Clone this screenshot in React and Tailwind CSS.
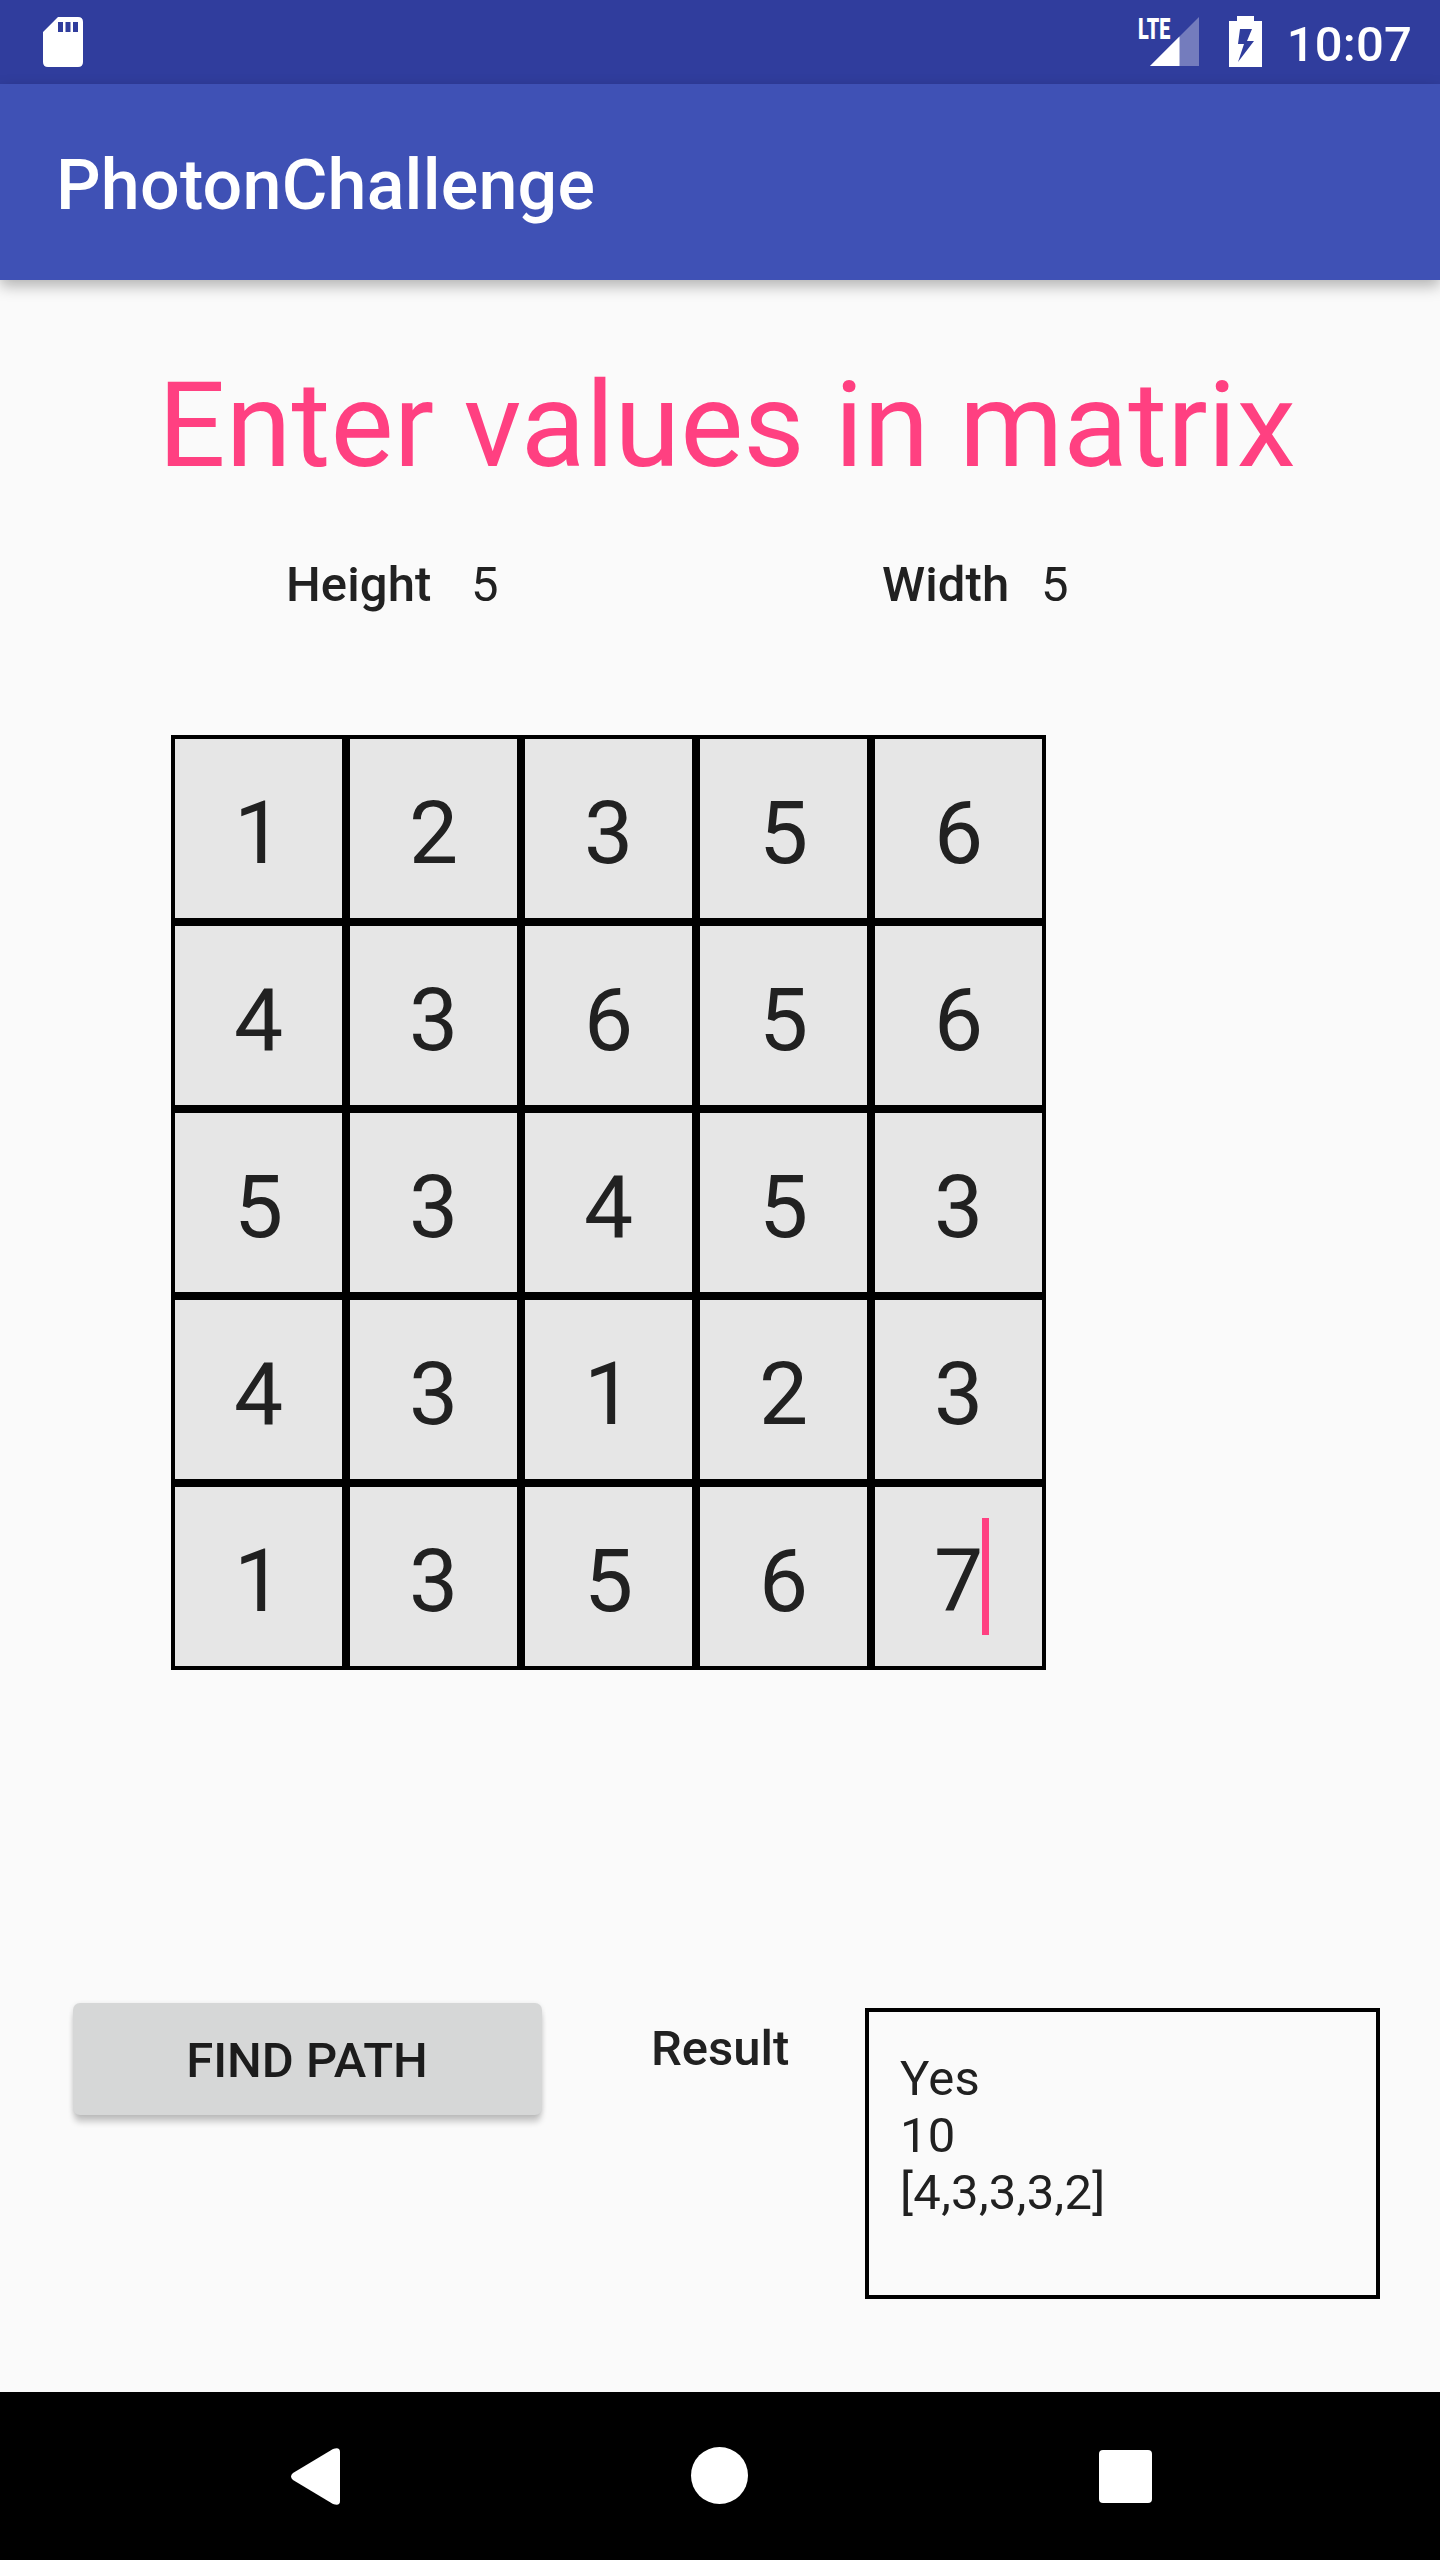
const matrix = [
  [1, 2, 3, 5, 6],
  [4, 3, 6, 5, 6],
  [5, 3, 4, 5, 3],
  [4, 3, 1, 2, 3],
  [1, 3, 5, 6, 7],
];

function StatusBar() {
  return (
    <div className="flex h-[84px] items-start bg-[#303d9d] pl-[43px] pr-[28px] text-white">
      <svg className="mt-[17px] h-[50px] w-10" viewBox="0 0 40 50" fill="currentColor">
        <path
          fillRule="evenodd"
          d="M15 0H35Q40 0 40 5V45Q40 50 35 50H5Q0 50 0 45V15ZM15 5V15H20V5ZM22.5 5V15H27.5V5ZM30 5V15H35V5Z"
        />
      </svg>
      <div className="ml-auto flex items-start">
        <div className="relative mt-[17px] h-[49px] w-[61px]">
          <svg className="h-[49px] w-[61px]" viewBox="0 0 61 49">
            <path d="M61 0V49H12Z" fill="#fff" fillOpacity="0.33" />
            <path d="M41.5 19.5V49H12Z" fill="#fff" />
          </svg>
          <span className="absolute left-0 top-[-5px] origin-left scale-x-[0.66] text-[30px] font-black leading-[34px]">LTE</span>
        </div>
        <svg className="ml-[30px] mt-4 h-[51px] w-[33px]" viewBox="0 0 33 51" fill="currentColor">
          <path
            fillRule="evenodd"
            d="M8 0H25V5H33V51H0V5H8ZM11 13L9 28H15L9 46L25 25H18L23 13Z"
          />
        </svg>
        <span className="ml-[25px] mt-4 text-[49px] font-medium leading-[57px] tracking-[0.2px]">10:07</span>
      </div>
    </div>
  );
}

function Cell({ value, focused }) {
  return (
    <div className="relative flex h-[187px] w-[175px] justify-center border-4 border-black bg-[#e6e6e6] pt-[42px] text-[87.5px] leading-[104px]">
      {value}
      {focused && <div className="absolute left-[107px] top-[31px] h-[117px] w-[7px] bg-[#ff4081]" />}
    </div>
  );
}

function NavBar() {
  return (
    <div className="flex h-[168px] items-start bg-black pl-[291px] text-white">
      <svg className="mt-14 h-[57px] w-[49px]" viewBox="0 0 49 57" fill="currentColor">
        <path d="M2 25L42 1Q49 -1.5 49 4V53Q49 58.500 42 56L2 32Q-2 28.500 2 25Z" />
      </svg>
      <div className="ml-[351px] mt-[55px] h-[57px] w-[57px] rounded-full bg-white" />
      <div className="ml-[351px] mt-[58px] h-[53px] w-[53px] rounded-[4px] bg-white" />
    </div>
  );
}

export default function App() {
  return (
    <div className="flex h-[2560px] w-[1440px] flex-col bg-[#fafafa] font-['Roboto',sans-serif] text-[#212121]">
      <StatusBar />
      <header className="z-10 h-[196px] bg-[#3f51b5] pl-14 pt-[60px] text-[70px] font-medium leading-[82px] tracking-[0.2px] text-white shadow-[0_6px_14px_rgba(0,0,0,0.29)]">
        PhotonChallenge
      </header>
      <main className="flex grow flex-col">
        <h1 className="mt-[76px] pl-[158px] text-[119px] leading-[139px] tracking-[0.09px] text-[#ff4081]">
          Enter values in matrix
        </h1>
        <div className="mt-[61px] flex text-[49px] leading-[57px]">
          <span className="ml-[286px] w-[185px] font-medium tracking-[0.1px]">Height</span>
          <span className="w-[411px]">5</span>
          <span className="w-[159px] font-medium tracking-[0.1px]">Width</span>
          <span>5</span>
        </div>
        <div className="ml-[171px] mt-[122px] grid w-[875px] grid-cols-5">
          {matrix.map((row, r) =>
            row.map((value, c) => <Cell key={`${r}-${c}`} value={value} focused={r === 4 && c === 4} />)
          )}
        </div>
        <div className="mt-[333px] flex items-start pl-[73px] text-[49px] leading-[57px]">
          <button className="h-[112px] w-[469px] rounded-[7px] bg-[#d6d7d7] pr-px pt-[3px] font-medium text-[#1c1c1c] shadow-[0_8px_6px_-1px_rgba(0,0,0,0.2),0_1px_5px_rgba(0,0,0,0.1)]">
            FIND PATH
          </button>
          <span className="ml-[109px] mt-[17px] w-[214px] font-medium">Result</span>
          <div className="mt-[5px] h-[291px] w-[515px] border-4 border-black pl-[31px] pt-[38px] tracking-[0.3px]">
            <div>Yes</div>
            <div>10</div>
            <div>[4,3,3,3,2]</div>
          </div>
        </div>
      </main>
      <NavBar />
    </div>
  );
}
